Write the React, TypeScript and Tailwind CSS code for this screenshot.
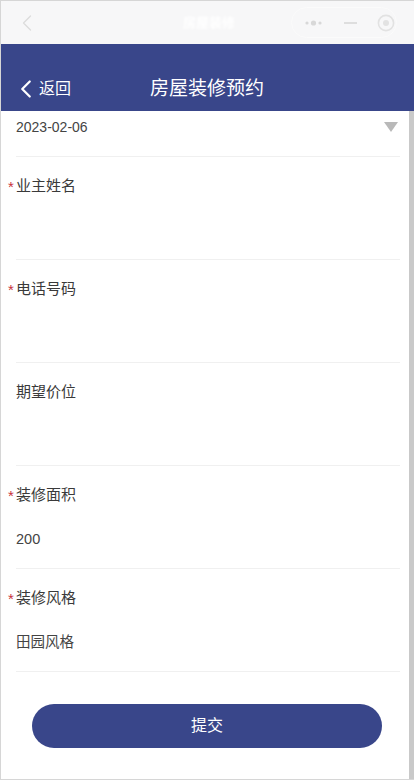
import { ChevronLeft } from 'lucide-react';

const fontStack = "font-['Liberation_Sans','Noto_Sans_CJK_SC',sans-serif]";

type Field = {
  label: string;
  value?: string;
  required?: boolean;
};

const fields: Field[] = [
  { label: '业主姓名', required: true },
  { label: '电话号码', required: true },
  { label: '期望价位' },
  { label: '装修面积', value: '200', required: true },
  { label: '装修风格', value: '田园风格', required: true },
];

function FormRow({ label, value, required }: Field) {
  return (
    <div className="h-[103px] border-b border-[#f0f0f0] pt-[19px]">
      <div className="relative h-5 text-[15px] leading-5 text-[#3a3a3a]">
        {required ? (
          <span className="absolute -left-[8px] top-[1px] text-[15px] leading-5 text-[#c8323c]">*</span>
        ) : null}
        {label}
      </div>
      <div className="mt-[24px] h-5 text-[14.5px] leading-5 text-[#444]">{value}</div>
    </div>
  );
}

export default function App() {
  return (
    <div className={`${fontStack} flex h-[780px] w-[414px] flex-col overflow-hidden border-t border-l border-b border-[#d6d6d6] bg-white`}>
      <div className="flex h-[43px] shrink-0 items-center bg-[#f7f7f8] pl-[12px] pr-[17px]">
        <ChevronLeft size={28} strokeWidth={1.1} className="text-[#dcdcdc]" />
        <div className="ml-[142px] text-[13px] font-bold text-white blur-[1px]">房屋装修</div>
        <div className="ml-auto flex h-[31px] w-[106px] items-center rounded-full border border-[#fbfbfb] pl-[12px]">
          <svg width="20" height="8" viewBox="0 0 20 8" className="text-[#d8d8d8]">
            <circle cx="3" cy="4" r="1.6" fill="currentColor" />
            <circle cx="9.5" cy="4" r="2.6" fill="currentColor" />
            <circle cx="16" cy="4" r="1.6" fill="currentColor" />
          </svg>
          <div className="ml-[20px] h-[2px] w-[13px] bg-[#dedede]" />
          <svg width="18" height="18" viewBox="0 0 18 18" className="ml-[20px] text-[#e2e2e2]">
            <circle cx="9" cy="9" r="7.6" fill="none" stroke="currentColor" strokeWidth="1.6" />
            <circle cx="9" cy="9" r="3" fill="currentColor" />
          </svg>
        </div>
      </div>

      <div className="relative flex h-[67px] shrink-0 items-end bg-[#39468a] pb-[11px] text-white">
        <div className="flex h-[22px] items-center pl-[10px]">
          <ChevronLeft size={30} strokeWidth={1.8} />
          <span className="-ml-[2px] text-base">返回</span>
        </div>
        <div className="absolute left-[149px] bottom-[9px] text-[19px] leading-[26px]">房屋装修预约</div>
      </div>

      <div className="flex min-h-0 flex-1">
        <div className="min-w-0 flex-1">
          <div className="pl-[15px] pr-[9px]">
            <div className="flex h-[46px] items-start justify-between border-b border-[#f0f0f0] pt-[6px]">
              <span className="text-sm leading-5 text-[#444]">2023-02-06</span>
              <svg width="14" height="10" viewBox="0 0 14 10" className="mt-[5px] mr-[2px] text-[#b9b9b9]">
                <polygon points="0,0 14,0 7,10" fill="currentColor" />
              </svg>
            </div>
            {fields.map((field) => (
              <FormRow key={field.label} {...field} />
            ))}
          </div>
          <div className="mt-[32px] pl-[31px]">
            <button className="h-[44px] w-[350px] rounded-full bg-[#39468a] text-base text-white">提交</button>
          </div>
        </div>
        <div className="w-[5px] shrink-0 bg-[#c9c9c9]" />
      </div>
    </div>
  );
}
